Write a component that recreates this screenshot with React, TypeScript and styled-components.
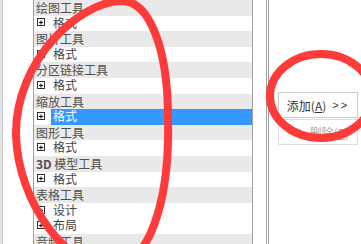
import React from "react";
import styled, { createGlobalStyle } from "styled-components";

const Global = createGlobalStyle`
  html, body { margin: 0; padding: 0; background: #ffffff; }
  body { font-family: "Noto Sans CJK SC", "Noto Sans", sans-serif; }
`;

const Frame = styled.div`
  position: relative;
  display: flex;
  width: 361px;
  height: 244px;
  overflow: hidden;
  background: #ffffff;
  font-family: "Noto Sans CJK SC", "Noto Sans", sans-serif;
  font-size: 12px;
`;

const EdgeStrip = styled.div`
  width: 2px;
  flex: none;
  background: #e4e4e4;
  border-right: 1px solid #c9c9c9;
`;

const Blank = styled.div<{ $w: number }>`
  width: ${(p) => p.$w}px;
  flex: none;
  background: #ffffff;
`;

const Rule = styled.div<{ $c?: string }>`
  width: 1px;
  flex: none;
  background: ${(p) => p.$c ?? "#a0a0a0"};
`;

const List = styled.div`
  width: 218px;
  flex: none;
  display: flex;
  flex-direction: column;
`;

const GroupRow = styled.div`
  height: 15.6px;
  flex: none;
  background: #e9e9e9;
  color: #505050;
  line-height: 15.6px;
  padding-left: 2px;
  white-space: nowrap;
`;

const Bold = styled.span`
  font-weight: 700;
`;

const ItemRow = styled.div`
  height: 15.6px;
  flex: none;
  display: flex;
  align-items: center;
  padding-left: 3px;
  background: #ffffff;
`;

const PlusBox = styled.svg`
  width: 8px;
  height: 8px;
  flex: none;
  margin-right: 6px;
  margin-top: -2px;
`;

const ItemLabel = styled.div<{ $sel?: boolean }>`
  flex: 1;
  height: 100%;
  line-height: 14px;
  padding-left: 2px;
  color: ${(p) => (p.$sel ? "#ffffff" : "#444444")};
  background: ${(p) => (p.$sel ? "#3399ff" : "transparent")};
`;

const RightPane = styled.div`
  flex: 1;
  display: flex;
  flex-direction: column;
  padding: 92px 0 0 9px;
  gap: 1px;
`;

const Button = styled.div<{ $disabled?: boolean }>`
  width: 80px;
  height: 26px;
  box-sizing: border-box;
  border: 1px solid ${(p) => (p.$disabled ? "#dcdcdc" : "#cccccc")};
  background: #ffffff;
  color: ${(p) => (p.$disabled ? "#a8a8a8" : "#333333")};
  display: flex;
  align-items: center;
  justify-content: center;
  white-space: nowrap;
  font-size: 12px;
`;

const Accel = styled.span`
  text-decoration: underline;
`;

const Arrows = styled.span`
  margin-left: 6px;
  letter-spacing: 2px;
  font-family: "Liberation Sans", sans-serif;
  font-size: 11px;
`;

const Marks = styled.svg`
  position: absolute;
  left: 0;
  top: 0;
  width: 361px;
  height: 244px;
  pointer-events: none;
`;

type Row = { kind: "group"; text: React.ReactNode } | { kind: "item"; text: string; sel?: boolean };

const rows: Row[] = [
  { kind: "group", text: "绘图工具" },
  { kind: "item", text: "格式" },
  { kind: "group", text: "图片工具" },
  { kind: "item", text: "格式" },
  { kind: "group", text: "分区链接工具" },
  { kind: "item", text: "格式" },
  { kind: "group", text: "缩放工具" },
  { kind: "item", text: "格式", sel: true },
  { kind: "group", text: "图形工具" },
  { kind: "item", text: "格式" },
  { kind: "group", text: <><Bold>3D</Bold> 模型工具</> },
  { kind: "item", text: "格式" },
  { kind: "group", text: "表格工具" },
  { kind: "item", text: "设计" },
  { kind: "item", text: "布局" },
  { kind: "group", text: "音频工具" },
];

const Plus = () => (
  <PlusBox viewBox="0 0 8 8">
    <rect x="0.5" y="0.5" width="7" height="7" fill="#ffffff" stroke="#333333" strokeWidth="1" />
    <path d="M2 4.5H6M4 2.5V6.5" stroke="#000000" strokeWidth="1" />
  </PlusBox>
);

export default function App() {
  return (
    <>
      <Global />
      <Frame>
        <EdgeStrip />
        <Blank $w={30} />
        <Rule />
        <List>
          {rows.map((r, i) =>
            r.kind === "group" ? (
              <GroupRow key={i}>{r.text}</GroupRow>
            ) : (
              <ItemRow key={i}>
                <Plus />
                <ItemLabel $sel={r.sel}>{r.text}</ItemLabel>
              </ItemRow>
            )
          )}
        </List>
        <Rule />
        <Blank $w={13} />
        <Rule />
        <Blank $w={1} />
        <Rule />
        <RightPane>
          <Button>
            添加(<Accel>A</Accel>)<Arrows>&gt;&gt;</Arrows>
          </Button>
          <Button $disabled>
            <Arrows style={{ marginLeft: 0, marginRight: 6 }}>&lt;&lt;</Arrows>删除(<Accel>R</Accel>)
          </Button>
        </RightPane>
        <Marks viewBox="0 0 361 244">
          <path
            d="M122 1 C150 1, 168 50, 168 118 C170 200, 150 268, 108 268 C70 268, 18 205, 16 135 C15 60, 80 1, 122 1 Z"
            fill="none"
            stroke="#fd3b3b"
            strokeWidth="8"
          />
          <ellipse cx="321" cy="96" rx="51" ry="42" fill="none" stroke="#fd3b3b" strokeWidth="8" />
        </Marks>
      </Frame>
    </>
  );
}
